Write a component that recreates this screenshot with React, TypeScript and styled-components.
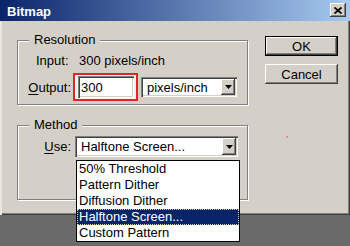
import styled, { createGlobalStyle } from "styled-components";

const GlobalStyle = createGlobalStyle`
  html, body {
    margin: 0;
    padding: 0;
  }
  body {
    background: #6a6a6a;
    font-family: "Liberation Sans", Arial, sans-serif;
    font-size: 13px;
    color: #000;
  }
`;

const Desktop = styled.div`
  width: 350px;
  height: 246px;
  background: #6a6a6a;
  overflow: hidden;
`;

const Window = styled.div`
  position: relative;
  width: 350px;
  height: 215px;
  box-sizing: border-box;
  background: #d4d0c8;
  box-shadow: inset 2px 0 #e9e7e2, inset -1px -1px #404040, inset -2px -2px #808080;
  display: flex;
  flex-direction: column;
`;

const TitleBar = styled.div`
  height: 21px;
  box-sizing: border-box;
  padding: 2px 4px 0 7px;
  display: flex;
  align-items: flex-start;
  justify-content: space-between;
  background: linear-gradient(to right, #0a246a, #a6caf0);
`;

const Title = styled.span`
  font-weight: bold;
  font-size: 13px;
  line-height: 19px;
  color: #fff;
`;

const CloseBtn = styled.button`
  margin-top: 1px;
  width: 16px;
  height: 14px;
  padding: 0;
  border: none;
  display: flex;
  align-items: center;
  justify-content: center;
  background: #d4d0c8;
  box-shadow: inset -1px -1px #404040, inset 1px 1px #fff, inset -2px -2px #808080;
`;

const Body = styled.div`
  display: flex;
  padding: 15px 0 0 17px;
`;

const Groups = styled.div`
  display: flex;
  flex-direction: column;
  gap: 20px;
  margin-top: 4px;
  width: 231px;
`;

const Group = styled.div<{ $h: number; $top: number }>`
  position: relative;
  height: ${(p) => p.$h}px;
  box-sizing: border-box;
  padding-top: ${(p) => p.$top}px;
  border: 1px solid #808080;
  box-shadow: inset 1px 1px #fff, 1px 1px #fff;
`;

const Legend = styled.span`
  position: absolute;
  top: -9px;
  left: 11px;
  padding: 0 5px;
  line-height: 15px;
  background: #d4d0c8;
`;

const InfoRow = styled.div`
  display: flex;
  padding-left: 18px;
  line-height: 15px;
`;

const InfoLabel = styled.span`
  width: 43px;
`;

const Row = styled.div<{ $mt?: number }>`
  display: flex;
  align-items: center;
  margin-top: ${(p) => p.$mt ?? 0}px;
`;

const Label = styled.span`
  width: 53px;
  text-align: right;
  line-height: 15px;
  u {
    text-decoration: underline;
    text-underline-offset: 2px;
  }
`;

const Highlight = styled.div`
  margin-left: 2px;
  padding: 1px 2px 1px 3px;
  border: 2px solid #e3222c;
  background: #f3f1ee;
`;

const TextBox = styled.div`
  width: 56px;
  height: 22px;
  box-sizing: border-box;
  padding-left: 3px;
  display: flex;
  align-items: center;
  background: #fff;
  box-shadow: inset 1px 1px #808080, inset 2px 2px #404040, inset -1px -1px #fff, inset -2px -2px #d4d0c8;
`;

const Select = styled.div<{ $w: number; $h: number; $gap: number }>`
  position: relative;
  margin-left: ${(p) => p.$gap}px;
  width: ${(p) => p.$w}px;
  height: ${(p) => p.$h}px;
  box-sizing: border-box;
  padding: 2px;
  display: flex;
  align-items: center;
  background: #fff;
  box-shadow: inset 1px 1px #808080, inset 2px 2px #404040, inset -1px -1px #fff, inset -2px -2px #d4d0c8;
`;

const SelectText = styled.span`
  flex: 1;
  padding-left: 4px;
  white-space: nowrap;
  overflow: hidden;
`;

const ArrowBtn = styled.span`
  width: 14px;
  align-self: stretch;
  display: flex;
  align-items: center;
  justify-content: center;
  background: #d4d0c8;
  box-shadow: inset -1px -1px #404040, inset 1px 1px #fff, inset -2px -2px #808080;
`;

const List = styled.ul`
  position: absolute;
  top: calc(100% + 3px);
  left: 1px;
  width: 164px;
  margin: 0;
  padding: 0;
  list-style: none;
  box-sizing: border-box;
  border: 1px solid #000;
  background: #fff;
  z-index: 2;
`;

const Item = styled.li<{ $active?: boolean }>`
  height: 16px;
  line-height: 16px;
  padding-left: 2px;
  white-space: nowrap;
  background: ${(p) => (p.$active ? "#0a246a" : "#fff")};
  color: ${(p) => (p.$active ? "#fff" : "#000")};
  outline: ${(p) => (p.$active ? "1px dotted #d6d3a8" : "none")};
  outline-offset: -1px;
`;

const Side = styled.div`
  display: flex;
  flex-direction: column;
  gap: 8px;
  margin-left: 17px;
`;

const Button = styled.button<{ $default?: boolean }>`
  width: 73px;
  height: 20px;
  padding: 0;
  font: inherit;
  color: #000;
  background: #d4d0c8;
  border: ${(p) => (p.$default ? "1px solid #000" : "none")};
  box-shadow: inset -1px -1px #404040, inset 1px 1px #fff, inset -2px -2px #808080;
`;

const Speck = styled.span`
  position: absolute;
  left: 286px;
  top: 136px;
  width: 2px;
  height: 2px;
  background: #e58a8a;
`;

function Arrow() {
  return (
    <svg width="7" height="4" viewBox="0 0 7 4">
      <path d="M0 0H7L3.5 4Z" fill="#000" />
    </svg>
  );
}

const methods = ["50% Threshold", "Pattern Dither", "Diffusion Dither", "Halftone Screen...", "Custom Pattern"];

export default function App() {
  return (
    <Desktop>
      <GlobalStyle />
      <Window>
        <TitleBar>
          <Title>Bitmap</Title>
          <CloseBtn type="button">
            <svg width="8" height="7" viewBox="0 0 8 7">
              <path d="M0.5 0.5L7.5 6.5M7.5 0.5L0.5 6.5" stroke="#000" strokeWidth="1.8" />
            </svg>
          </CloseBtn>
        </TitleBar>
        <Body>
          <Groups>
            <Group $h={65} $top={12}>
              <Legend>Resolution</Legend>
              <InfoRow>
                <InfoLabel>Input:</InfoLabel>
                <span>300 pixels/inch</span>
              </InfoRow>
              <Row $mt={5}>
                <Label>
                  <u>O</u>utput:
                </Label>
                <Highlight>
                  <TextBox>300</TextBox>
                </Highlight>
                <Select $w={96} $h={20} $gap={3}>
                  <SelectText>pixels/inch</SelectText>
                  <ArrowBtn>
                    <Arrow />
                  </ArrowBtn>
                </Select>
              </Row>
            </Group>
            <Group $h={75} $top={10}>
              <Legend>Method</Legend>
              <Row>
                <Label>
                  <u>U</u>se:
                </Label>
                <Select $w={163} $h={21} $gap={4}>
                  <SelectText>Halftone Screen...</SelectText>
                  <ArrowBtn>
                    <Arrow />
                  </ArrowBtn>
                  <List>
                    {methods.map((m) => (
                      <Item key={m} $active={m === "Halftone Screen..."}>
                        {m}
                      </Item>
                    ))}
                  </List>
                </Select>
              </Row>
            </Group>
          </Groups>
          <Side>
            <Button $default type="button">OK</Button>
            <Button type="button">Cancel</Button>
          </Side>
        </Body>
        <Speck />
      </Window>
    </Desktop>
  );
}
